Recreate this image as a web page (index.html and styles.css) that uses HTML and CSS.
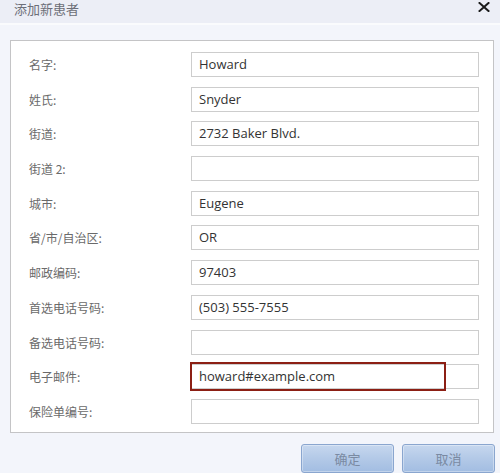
FILE: index.html
```html
<!DOCTYPE html>
<html lang="zh-CN">
<head>
<meta charset="utf-8">
<title>添加新患者</title>
<link rel="stylesheet" href="styles.css">
</head>
<body>
<div class="dialog">
  <div class="titlebar">
    <span class="title">添加新患者</span>
    <svg class="close" width="12" height="10" viewBox="0 0 12 10" aria-label="关闭">
      <path d="M1.5 1 L10.5 9 M10.5 1 L1.5 9" stroke="#1a1a1a" stroke-width="2" stroke-linecap="square" fill="none"/>
    </svg>
  </div>
  <div class="sep"></div>
  <div class="content">
    <div class="panel">
      <div class="row"><span class="label">名字:</span><span class="field">Howard</span></div>
      <div class="row"><span class="label">姓氏:</span><span class="field">Snyder</span></div>
      <div class="row"><span class="label">街道:</span><span class="field">2732 Baker Blvd.</span></div>
      <div class="row"><span class="label">街道 2:</span><span class="field"></span></div>
      <div class="row"><span class="label">城市:</span><span class="field">Eugene</span></div>
      <div class="row"><span class="label">省/市/自治区:</span><span class="field">OR</span></div>
      <div class="row"><span class="label">邮政编码:</span><span class="field">97403</span></div>
      <div class="row"><span class="label">首选电话号码:</span><span class="field">(503) 555-7555</span></div>
      <div class="row"><span class="label">备选电话号码:</span><span class="field"></span></div>
      <div class="row"><span class="label">电子邮件:</span><span class="field has-error">howard#example.com<span class="error-box"></span></span></div>
      <div class="row"><span class="label">保险单编号:</span><span class="field"></span></div>
    </div>
    <div class="actions">
      <button class="btn">确定</button>
      <button class="btn">取消</button>
    </div>
  </div>
</div>
</body>
</html>
```

FILE: styles.css
```css
html, body {
  margin: 0;
  padding: 0;
}
body {
  width: 500px;
  height: 473px;
  overflow: hidden;
  background: #f3f5fb;
  font-family: "Open Sans", "Noto Sans CJK SC", sans-serif;
}
.dialog {
  width: 500px;
  height: 473px;
  display: flex;
  flex-direction: column;
}
.titlebar {
  height: 23px;
  background: #eceef6;
  display: flex;
  align-items: flex-start;
  justify-content: space-between;
  padding: 0 10px 0 14px;
  box-sizing: border-box;
}
.title {
  font-family: "Noto Sans CJK SC", sans-serif;
  font-size: 13px;
  line-height: 18px;
  color: #6d6f78;
}
.close {
  margin-top: 2px;
}
.sep {
  height: 2px;
  background: #fafbfd;
}
.content {
  flex: 1;
  padding: 15px 5px 0 10px;
  display: flex;
  flex-direction: column;
}
.panel {
  width: 464px;
  height: 380px;
  border: 1px solid #c4c4c6;
  background: #ffffff;
  padding: 11px 0 0 18px;
  display: flex;
  flex-direction: column;
  gap: 9.7px;
}
.row {
  display: grid;
  grid-template-columns: 162px 288px;
  align-items: center;
  height: 25px;
}
.label {
  font-family: "Noto Sans CJK SC", sans-serif;
  font-size: 12px;
  color: #6a6a6a;
}
.field {
  position: relative;
  box-sizing: border-box;
  height: 25px;
  border: 1px solid #cdcdcd;
  background: #fff;
  font-size: 13px;
  line-height: 23px;
  color: #333;
  padding-left: 7px;
}
.error-box {
  position: absolute;
  left: -2px;
  top: -3px;
  width: 256px;
  height: 29px;
  border: 2px solid #8c1f14;
  box-sizing: border-box;
}
.actions {
  display: flex;
  justify-content: flex-end;
  gap: 8px;
  margin-top: 11px;
}
.btn {
  width: 93px;
  height: 29px;
  border: 1px solid #8aa6cf;
  border-radius: 3px;
  background: linear-gradient(to bottom, #c6d7ee 0%, #b3c9e7 50%, #a2bde2 100%);
  box-shadow: inset 0 0 0 1px rgba(255,255,255,0.35);
  font-family: "Noto Sans CJK SC", sans-serif;
  font-size: 13px;
  color: #7a8aa2;
  padding: 0;
}
```
